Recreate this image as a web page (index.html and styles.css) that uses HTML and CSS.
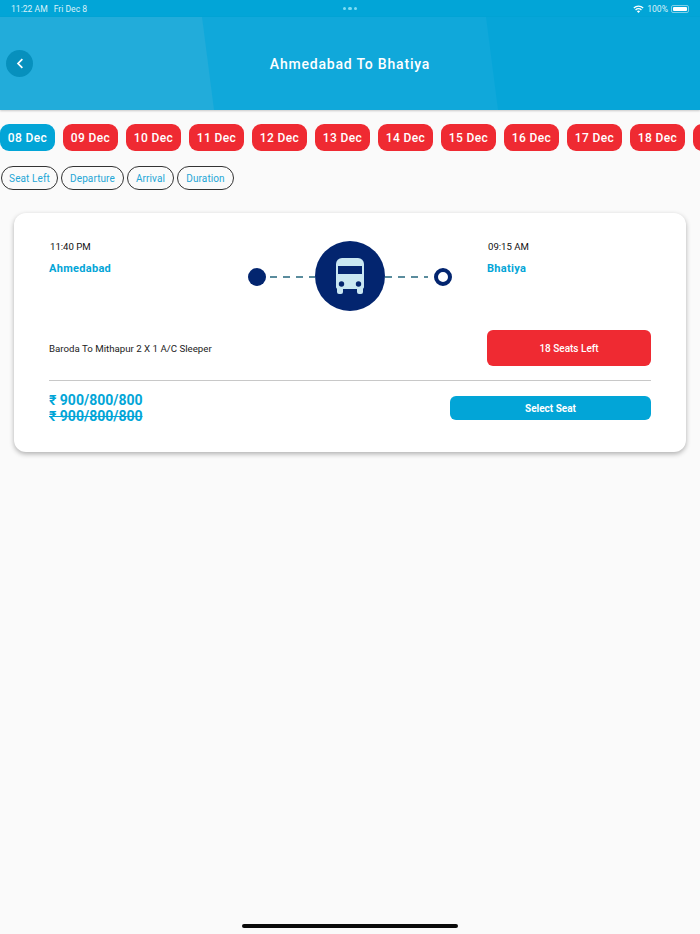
FILE: index.html
```html
<!DOCTYPE html>
<html lang="en">
<head>
  <meta charset="UTF-8" />
  <title>Ahmedabad To Bhatiya</title>
  <link rel="stylesheet" href="styles.css">
</head>
<body>

  <div class="status-bar">
    <div class="status-left"><span>11:22 AM</span><span>Fri Dec 8</span></div>
    <div class="status-dots"><i></i><i></i><i></i></div>
    <div class="status-right">
      <svg class="wifi" viewBox="0 0 16 12" width="11" height="8">
        <path d="M8 12 5.6 9.4a3.4 3.4 0 0 1 4.8 0Z" fill="#fff"/>
        <path d="M3.6 7.4a6.2 6.2 0 0 1 8.8 0" fill="none" stroke="#fff" stroke-width="1.9"/>
        <path d="M1 4.6a9.9 9.9 0 0 1 14 0" fill="none" stroke="#fff" stroke-width="1.9"/>
      </svg>
      <span>100%</span>
      <div class="battery"><div class="battery-fill"></div></div>
    </div>
  </div>

  <header class="header">
    <button class="back-btn">
      <svg viewBox="0 0 10 14" width="8" height="11"><path d="M8 1.5 2.5 7 8 12.5" fill="none" stroke="#fff" stroke-width="2.2"/></svg>
    </button>
    <h1 class="header-title">Ahmedabad To Bhatiya</h1>
  </header>

  <div class="date-strip">
    <div class="date-chip active">08 Dec</div>
    <div class="date-chip">09 Dec</div>
    <div class="date-chip">10 Dec</div>
    <div class="date-chip">11 Dec</div>
    <div class="date-chip">12 Dec</div>
    <div class="date-chip">13 Dec</div>
    <div class="date-chip">14 Dec</div>
    <div class="date-chip">15 Dec</div>
    <div class="date-chip">16 Dec</div>
    <div class="date-chip">17 Dec</div>
    <div class="date-chip">18 Dec</div>
    <div class="date-chip"></div>
  </div>

  <div class="filters">
    <div class="filter filter-seat">Seat Left</div>
    <div class="filter filter-dep">Departure</div>
    <div class="filter filter-arr">Arrival</div>
    <div class="filter filter-dur">Duration</div>
  </div>

  <section class="card">
    <div class="route-row">
      <div class="stop">
        <div class="stop-time">11:40 PM</div>
        <div class="stop-city">Ahmedabad</div>
      </div>
      <div class="track">
        <div class="dot"></div>
        <div class="dash dash-left"></div>
        <div class="bus-circle">
          <svg viewBox="0 0 30 36" width="30" height="36">
            <path fill="#c9e7f2" fill-rule="evenodd" d="M7 0h16a6 6 0 0 1 6 6v23a2 2 0 0 1-1 1.7V34a2 2 0 0 1-2 2h-2a2 2 0 0 1-2-2v-3H8v3a2 2 0 0 1-2 2H4a2 2 0 0 1-2-2v-3.300A2 2 0 0 1 1 29V6a6 6 0 0 1 6-6ZM3 8v8h24V8Z"/>
            <circle cx="6.500" cy="26" r="2.700" fill="#03256f"/>
            <circle cx="23.500" cy="26" r="2.700" fill="#03256f"/>
          </svg>
        </div>
        <div class="dash dash-right"></div>
        <div class="ring"></div>
      </div>
      <div class="stop">
        <div class="stop-time">09:15 AM</div>
        <div class="stop-city">Bhatiya</div>
      </div>
    </div>

    <div class="info-row">
      <div class="bus-name">Baroda To Mithapur 2 X 1 A/C Sleeper</div>
      <div class="seats-left">18 Seats Left</div>
    </div>

    <div class="price-row">
      <div class="prices">
        <div class="price">₹ 900/800/800</div>
        <div class="price old">₹ 900/800/800</div>
      </div>
      <button class="select-btn">Select Seat</button>
    </div>
  </section>

  <div class="home-bar"></div>

</body>
</html>
```

FILE: styles.css
```css
* {
  margin: 0; padding: 0; box-sizing: border-box;
  font-family: 'Roboto', sans-serif;
}
html, body { height: 100%; width: 100%; overflow: hidden; }
body {
  display: flex; flex-direction: column;
  background: #fafafa;
}

/* status bar */
.status-bar {
  height: 17px; flex-shrink: 0;
  display: grid; grid-template-columns: 1fr auto 1fr; align-items: center;
  padding: 0 11px;
  background: #02a5d7;
  color: #d9f1f9; font-size: 8.6px;
}
.status-left { display: flex; gap: 6px; }
.status-dots { display: flex; gap: 2px; }
.status-dots i { width: 3.500px; height: 3.500px; border-radius: 50%; background: #7fdcf3; }
.status-right { display: flex; justify-content: flex-end; align-items: center; gap: 3px; }
.battery {
  width: 18px; height: 8px; padding: 1px;
  border: 1px solid #7ecfe9; border-radius: 2px;
}
.battery-fill { height: 100%; background: #fff; border-radius: 1px; }

/* header */
.header {
  height: 93px; flex-shrink: 0;
  position: relative; overflow: hidden;
  display: flex; align-items: center; justify-content: center;
  background: #06a5d8;
  box-shadow: 0 1px 2px rgba(0,0,0,0.2);
}
.header::before, .header::after {
  content: ""; position: absolute; top: 0; bottom: 0; left: 0;
}
.header::before {
  width: 498px; background: #10a8da;
  clip-path: polygon(0 0, 486px 0, 100% 100%, 0 100%);
}
.header::after {
  width: 214px; background: #22acda;
  clip-path: polygon(0 0, 202px 0, 100% 100%, 0 100%);
}
.back-btn {
  position: absolute; left: 6px; top: 33px; z-index: 1;
  width: 27px; height: 27px;
  display: flex; align-items: center; justify-content: center;
  background: #0790bd; border: none; border-radius: 50%;
}
.header-title {
  position: relative; z-index: 1;
  color: #fff; font-size: 14px; font-weight: 500; letter-spacing: 0.8px;
}

/* dates */
.date-strip {
  display: flex; gap: 8px; flex-shrink: 0;
  margin-top: 14px;
  overflow: hidden;
}
.date-chip {
  flex: 0 0 55px; height: 27px;
  display: flex; align-items: center; justify-content: center;
  background: #ef2a32; color: #fff;
  font-size: 12px; font-weight: 500; letter-spacing: 0.4px;
  border-radius: 9px;
}
.date-chip.active { background: #02a5d7; }

/* filters */
.filters {
  display: flex; gap: 3px; flex-shrink: 0;
  margin-top: 15px; padding-left: 1px;
}
.filter {
  height: 24px;
  display: flex; align-items: center; justify-content: center;
  border: 1px solid #333; border-radius: 12px;
  color: #1fa6d6; font-size: 10px; letter-spacing: 0.1px;
}
.filter-seat { width: 57px; }
.filter-dep { width: 63px; }
.filter-arr { width: 47px; }
.filter-dur { width: 57px; }

/* card */
.card {
  margin: 23px 14px 0;
  height: 239px; flex-shrink: 0;
  padding: 28px 35px 0;
  background: #fff; border-radius: 12px;
  box-shadow: 0 2px 5px rgba(0,0,0,0.3);
}
.route-row {
  display: grid; grid-template-columns: 199px 204px 1fr;
  height: 70px;
}
.route-row .stop:last-child { padding-left: 35px; }
.stop-time { font-size: 9.6px; line-height: 12px; color: #111; padding-left: 1px; }
.stop-city { font-size: 11px; font-weight: 700; line-height: 14px; margin-top: 9px; color: #02a5d7; letter-spacing: 0.3px; }
.track { display: flex; align-items: center; }
.dot, .ring, .dash { margin-top: 2px; }
.dot { width: 18px; height: 18px; border-radius: 50%; background: #03256f; flex-shrink: 0; }
.ring { width: 18px; height: 18px; border-radius: 50%; border: 4px solid #03256f; flex-shrink: 0; }
.dash {
  height: 2px; flex-shrink: 0;
  background: repeating-linear-gradient(to right, #5a8c9d 0 7px, transparent 7px 13px);
}
.dash-left { width: 45px; margin-left: 4px; }
.dash-right { width: 43px; margin-right: 6px; }
.bus-circle {
  width: 70px; height: 70px; flex-shrink: 0;
  display: flex; align-items: center; justify-content: center;
  background: #03256f; border-radius: 50%;
}
.info-row {
  display: flex; justify-content: space-between; align-items: center;
  margin-top: 19px; padding-bottom: 14px;
  border-bottom: 1px solid #c8c8c8;
}
.bus-name { font-size: 9.7px; color: #222; }
.seats-left {
  width: 164px; height: 36px;
  display: flex; align-items: center; justify-content: center;
  background: #ef2a32; color: #fff;
  font-size: 10px; font-weight: 500; border-radius: 6px;
}
.price-row {
  display: flex; justify-content: space-between; align-items: center;
  margin-top: 11px;
}
.price { font-size: 14px; font-weight: 700; line-height: 16px; color: #02a5d7; }
.price.old { text-decoration: line-through; }
.select-btn {
  width: 201px; height: 24px;
  background: #02a5d7; color: #fff; border: none;
  font-size: 10px; font-weight: 700; border-radius: 6px;
}

.home-bar {
  width: 216px; height: 4px; flex-shrink: 0;
  margin: auto auto 6px;
  background: #0a0a0a; border-radius: 2px;
}
```
